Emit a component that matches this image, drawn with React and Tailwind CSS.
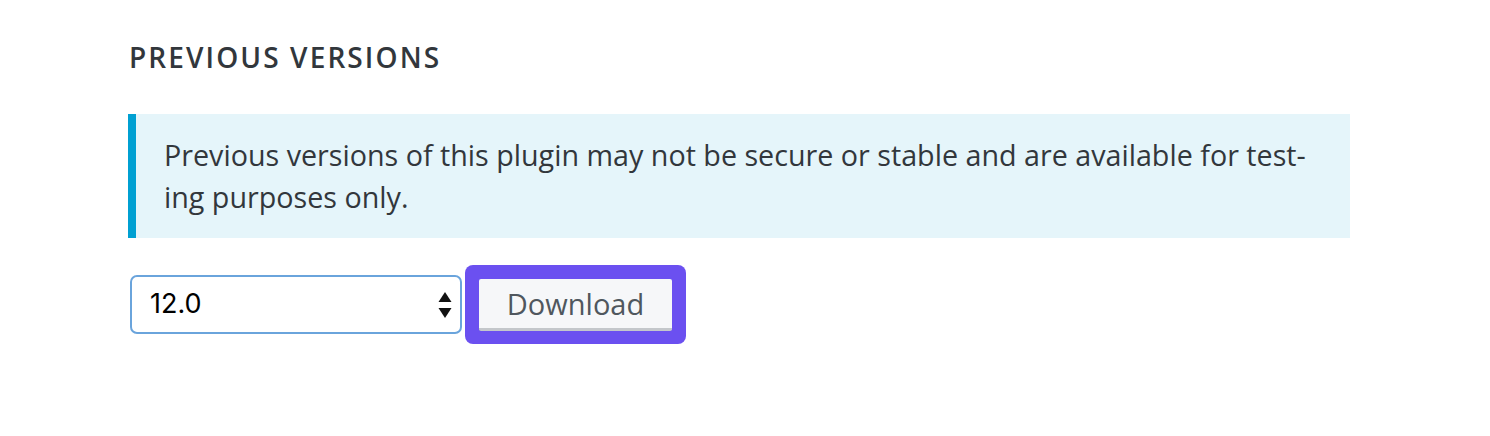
import React from 'react';

const App = () => {
  return (
    <div className="min-h-[436px] w-[1490px] bg-white pl-[128px] pt-[38px] font-['Open_Sans',sans-serif] text-[#32373c]">
      <h2 className="pl-[1px] text-[28px] font-semibold uppercase leading-[38px] tracking-[0.075em]">
        Previous versions
      </h2>

      <div className="mt-[38px] w-[1222px] border-l-[8px] border-[#00a0d2] bg-[#e5f5fa] py-[20px] pl-[28px] pr-[28px]">
        <p className="text-[28.7px] leading-[42px]">
          Previous versions of this plugin may not be secure or stable and are available for test-
          <br />
          ing purposes only.
        </p>
      </div>

      <div className="mt-[27px] flex items-center pl-[2px]">
        <div className="flex h-[59px] w-[332px] items-center justify-between rounded-[7px] border-2 border-[#6aa4dc] bg-white pl-[18px] pr-[8px] font-['Inter',sans-serif]">
          <span className="text-[27px] text-black">12.0</span>
          <svg width="14" height="26" viewBox="0 0 14 26" className="text-[#111]">
            <path d="M7 0 L13.5 10 H0.5 Z" fill="currentColor" />
            <path d="M7 26 L13.5 16 H0.5 Z" fill="currentColor" />
          </svg>
        </div>

        <div className="ml-[3px] rounded-[8px] bg-[#6b50f0] p-[14px] pb-[13px]">
          <button className="flex h-[52px] w-[193px] items-center justify-center rounded-[2px] border-b-[3px] border-[#c4c7cb] bg-[#f6f7f9] pt-[1px] text-[29px] text-[#50575e]">
            Download
          </button>
        </div>
      </div>
    </div>
  );
};

export default App;
